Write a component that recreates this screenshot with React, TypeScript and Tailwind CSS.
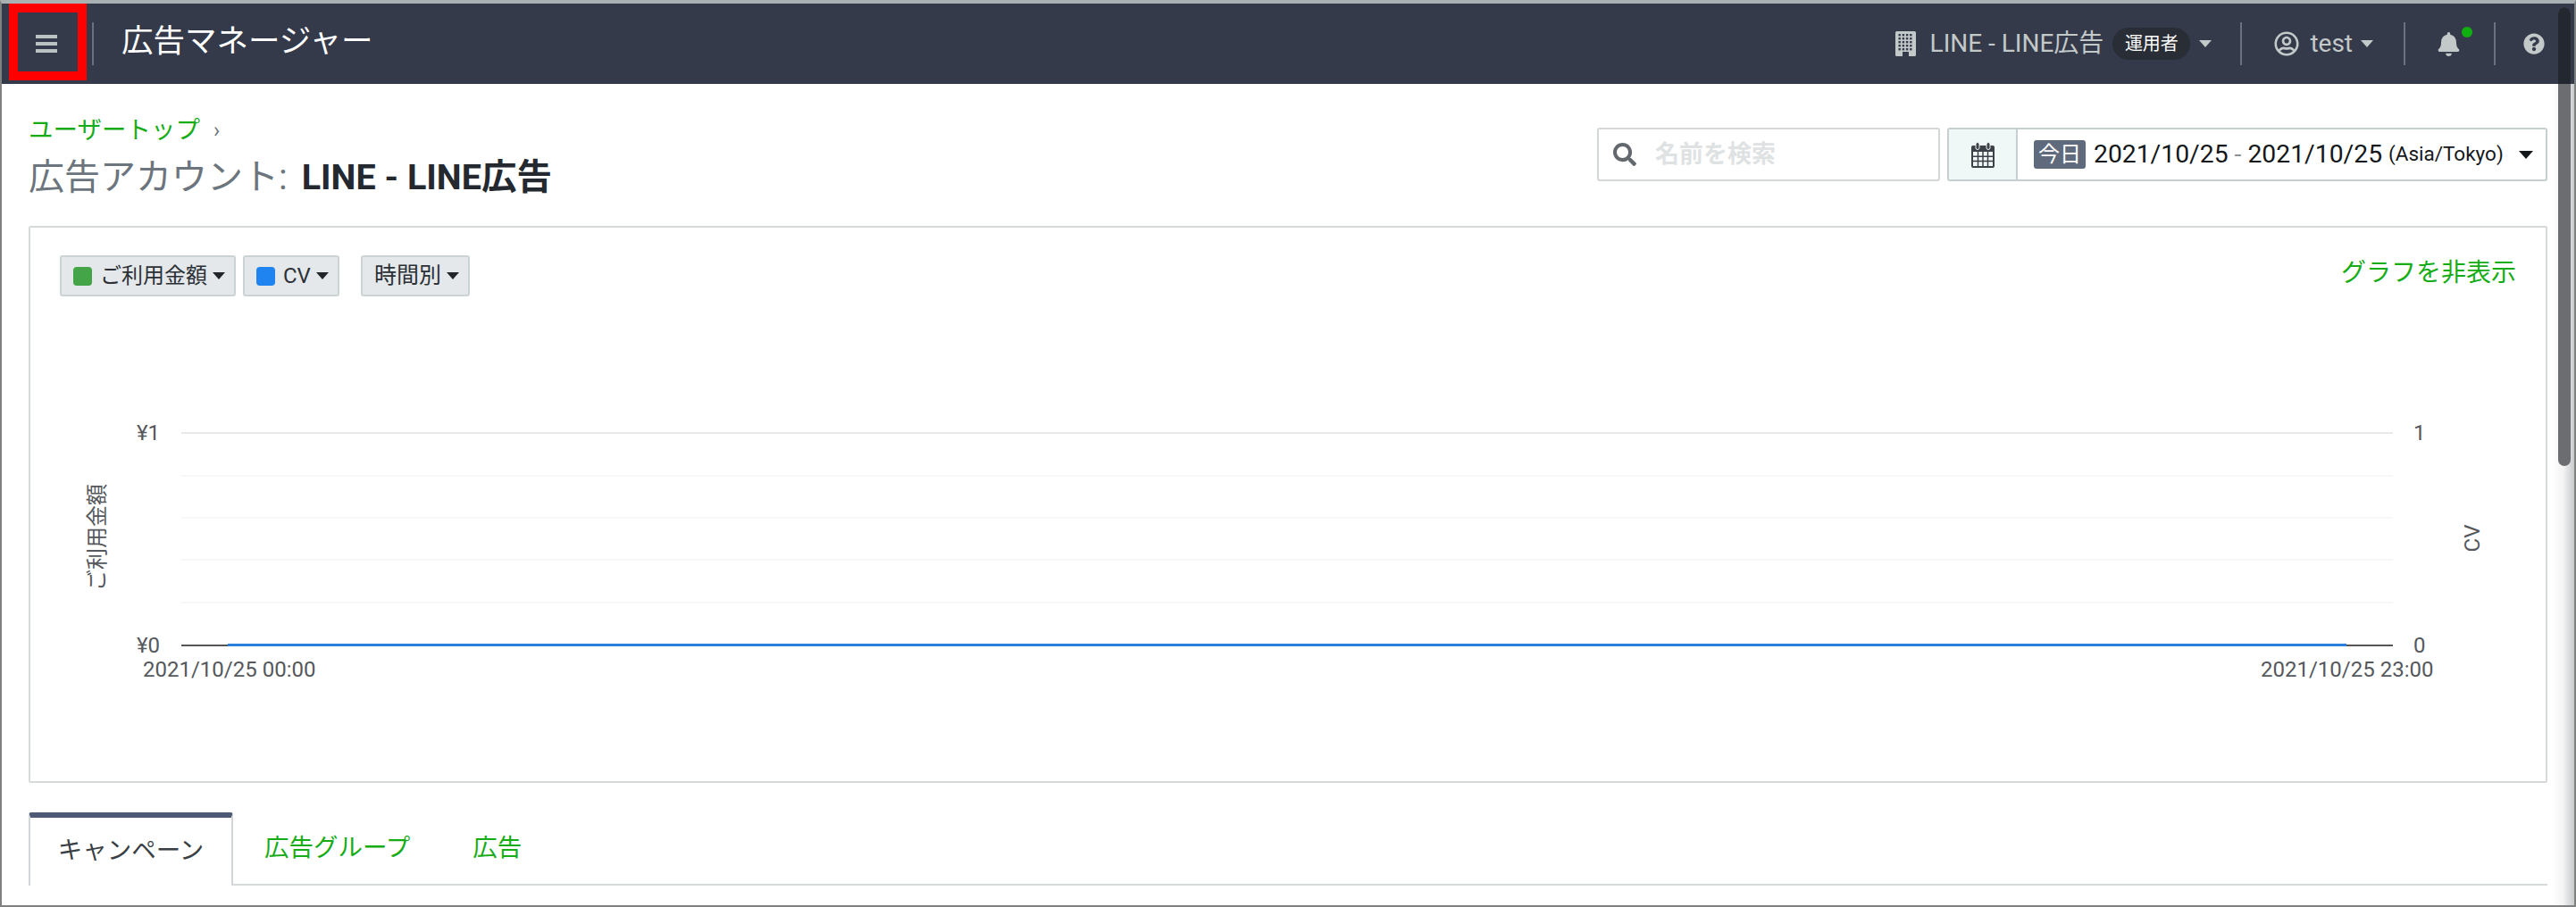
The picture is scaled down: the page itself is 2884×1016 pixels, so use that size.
import React from "react";
import { FaBell, FaQuestionCircle, FaRegUserCircle, FaSearch } from "react-icons/fa";

const Caret = ({ className }: { className: string }) => (
  <span className={`inline-block h-0 w-0 border-x-[7px] border-t-[8px] border-x-transparent ${className}`} />
);

const BuildingIcon = () => {
  const dots: React.ReactNode[] = [];
  for (let r = 0; r < 5; r++) {
    for (let c = 0; c < 4; c++) {
      dots.push(<rect key={`${r}-${c}`} x={3.5 + c * 4.2} y={3 + r * 4} width="2.4" height="2.4" fill="#343a4a" />);
    }
  }
  return (
    <svg width="23" height="28" viewBox="0 0 23 28" className="shrink-0">
      <rect width="23" height="28" rx="1.5" fill="#c3c8c9" />
      {dots}
      <rect x="8" y="23" width="7" height="5" fill="#343a4a" />
    </svg>
  );
};

const CalendarIcon = () => (
  <svg width="26" height="29" viewBox="0 0 26 29">
    <path d="M2 4h22a2 2 0 0 1 2 2v21a2 2 0 0 1-2 2H2a2 2 0 0 1-2-2V6a2 2 0 0 1 2-2z" fill="#3c4148" />
    <rect x="5" y="0.5" width="4" height="8" rx="2" fill="#3c4148" stroke="#f0f7f7" strokeWidth="1" />
    <rect x="17" y="0.5" width="4" height="8" rx="2" fill="#3c4148" stroke="#f0f7f7" strokeWidth="1" />
    <path d="M2 11h22v16H2z" fill="#f0f7f7" />
    <path d="M7.5 11v16M13 11v16M18.500 11v16M2 16.300h22M2 21.600h22" stroke="#3c4148" strokeWidth="1.500" />
  </svg>
);

const Sep = ({ className = "" }: { className?: string }) => (
  <div className={`h-[48px] w-[2px] shrink-0 bg-[#6a7282] ${className}`} />
);

const ChartButton = ({ swatch, label, className = "" }: { swatch?: string; label: string; className?: string }) => (
  <button className={`flex h-[46px] items-center rounded-[3px] border-2 border-[#ccd3d4] bg-[#e4e8ea] pl-[13px] pr-[10px] text-[#2b3036] ${className}`}>
    {swatch && <span className={`mr-[9px] h-[21px] w-[21px] rounded-[4px] ${swatch}`} />}
    <span className="whitespace-nowrap">{label}</span>
    <Caret className="ml-[6px] border-t-[#22262b]" />
  </button>
);

const Chart = () => (
  <svg width="2815" height="535" className="block text-[24px]">
    <g fill="none" strokeWidth="2">
      <path d="M169 145H2645" stroke="#e8e9eb" />
      <path d="M169 193H2645M169 240H2645M169 287H2645M169 335H2645" stroke="#f7f7f9" />
      <path d="M169 383H2645" stroke="#555555" />
      <path d="M221 382.500H2593" stroke="#2b7fdc" strokeWidth="3" />
    </g>
    <g fill="#55585c">
      <text x="119" y="153">¥1</text>
      <text x="119" y="391">¥0</text>
      <text x="2668" y="153">1</text>
      <text x="2668" y="391">0</text>
      <text x="126" y="418">2021/10/25 00:00</text>
      <text x="2497" y="418">2021/10/25 23:00</text>
      <text x="83" y="262" textAnchor="middle" transform="rotate(-90 83 262)">ご利用金額</text>
      <text x="2742" y="263" textAnchor="middle" transform="rotate(-90 2742 263)">CV</text>
    </g>
  </svg>
);

export default function App() {
  return (
    <div className="relative h-[1016px] w-[2884px] overflow-hidden border-x-2 border-b-2 border-t-4 border-x-[#7f8080] border-b-[#7f8080] border-t-[#a9b1b2] bg-white [font-family:Roboto,'Noto_Sans_CJK_JP',sans-serif]">
      {/* Header */}
      <header className="flex h-[90px] items-center bg-[#343a4a] pr-[33px]">
        <button className="flex w-[101px] shrink-0 pl-[38px]">
          <span className="flex h-[20px] w-[24px] flex-col justify-between">
            <span className="h-[4px] bg-[#bcc2c3]" />
            <span className="h-[4px] bg-[#bcc2c3]" />
            <span className="h-[4px] bg-[#bcc2c3]" />
          </span>
        </button>
        <Sep />
        <div className="-mt-[4px] ml-[31px] whitespace-nowrap text-[35.500px] leading-none text-white">広告マネージャー</div>

        <div className="ml-auto flex items-center">
          <BuildingIcon />
          <span className="ml-[16px] whitespace-nowrap text-[28px] text-[#c3c8c9]">LINE - LINE広告</span>
          <span className="ml-[10px] flex h-[36px] w-[87px] items-center justify-center rounded-full bg-[#292d35] text-[20px] text-white">運用者</span>
          <Caret className="ml-[10px] border-t-[#c3c8c9]" />
          <Sep className="ml-[32px]" />
          <FaRegUserCircle className="ml-[36px] text-[28px] text-[#c3c8c9]" />
          <span className="ml-[12px] text-[28px] text-[#c3c8c9]">test</span>
          <Caret className="ml-[9px] border-t-[#c3c8c9]" />
          <Sep className="ml-[34px]" />
          <div className="relative ml-[35px]">
            <FaBell className="text-[27px] text-[#c3c8c9]" />
            <span className="absolute -right-[13px] -top-[6px] h-[12px] w-[12px] rounded-full bg-[#10b010]" />
          </div>
          <Sep className="ml-[37px]" />
          <FaQuestionCircle className="ml-[31px] text-[24px] text-[#c3c8c9]" />
        </div>
      </header>

      <main className="pl-[30px] pr-[30px]">
        {/* Title row */}
        <div className="flex items-start justify-between pt-[32px]">
          <div>
            <div className="flex h-[40px] items-center text-[27.500px]">
              <a className="text-[#16ac16]">ユーザートップ</a>
              <span className="ml-[15px] text-[24px] text-[#6c757d]">›</span>
            </div>
            <h1 className="mt-[5px] flex h-[56px] items-center whitespace-pre text-[40px] text-[#6c757d]">
              広告アカウント:<span className="ml-[16px] text-[39.500px] font-bold text-[#23292f]">LINE - LINE広告</span>
            </h1>
          </div>
          <div className="mt-[17px] flex">
            <div className="flex h-[60px] w-[384px] items-center rounded-[3px] border-2 border-[#d3d7d8] bg-white pl-[16px]">
              <FaSearch className="text-[26px] text-[#62686e]" />
              <span className="ml-[21px] text-[27px] font-bold text-[#dfe2e3]">名前を検索</span>
            </div>
            <div className="ml-[8px] flex h-[60px] w-[672px] rounded-[3px] border-2 border-[#c6cfd0]">
              <div className="flex w-[77px] items-center justify-center border-r-2 border-[#c6cfd0] bg-[#f0f7f7]">
                <CalendarIcon />
              </div>
              <div className="flex flex-1 items-center pl-[18px]">
                <span className="flex h-[32px] w-[58px] items-center justify-center rounded-[3px] bg-[#5f6b7c] text-[24px] text-white">今日</span>
                <span className="ml-[9px] whitespace-pre text-[28.300px] text-[#15181b]">
                  2021/10/25 <span className="text-[#8a9095]">-</span> 2021/10/25
                </span>
                <span className="ml-[7px] whitespace-nowrap text-[22.500px] text-[#15181b]">(Asia/Tokyo)</span>
                <Caret className="ml-[17px] border-x-[8px] border-t-[9px] border-t-[#15181b]" />
              </div>
            </div>
          </div>
        </div>

        {/* Chart card */}
        <section className="mt-[26px] h-[624px] rounded-[2px] border-2 border-[#d7dada]">
          <div className="flex items-start pl-[33px] pr-[33px] pt-[31px] pb-[8px]">
            <ChartButton swatch="bg-[#43a547]" label="ご利用金額" className="text-[24px]" />
            <ChartButton swatch="bg-[#1f84ef]" label="CV" className="ml-[8px] text-[24px]" />
            <ChartButton label="時間別" className="ml-[24px] text-[25px]" />
            <a className="ml-auto mt-[-1px] text-[28px] text-[#16ac16]">グラフを非表示</a>
          </div>
          <Chart />
        </section>

        {/* Tabs */}
        <nav className="mt-[33px] flex h-[82px] border-b-2 border-[#d7dada] text-[27.500px]">
          <div className="-mb-[2px] flex h-[82px] w-[229px] items-center justify-center rounded-t-[3px] border-x-2 border-t-[6px] border-x-[#d3d6d8] border-t-[#4e5a73] bg-white pb-[2px] text-[#3a3f45]">
            キャンペーン
          </div>
          <a className="ml-[35px] flex items-center text-[#16ac16]">広告グループ</a>
          <a className="ml-[70px] flex items-center text-[#16ac16]">広告</a>
        </nav>
      </main>

      {/* Scrollbar */}
      <div className="absolute bottom-0 right-0 top-[90px] w-[25px] bg-linear-to-r from-white via-[#f4f4f5] to-[#c9cacc]" />
      <div className="absolute right-[4px] top-[4px] h-[514px] w-[14px] overflow-hidden rounded-t-[7px] rounded-b-[7px] bg-[#6b6d70]">
        <div className="h-[86px] bg-[#23272f]" />
      </div>

      {/* Annotation */}
      <div className="absolute left-[8px] top-0 h-[86px] w-[87px] border-[10px] border-[#ff0000]" />
    </div>
  );
}
